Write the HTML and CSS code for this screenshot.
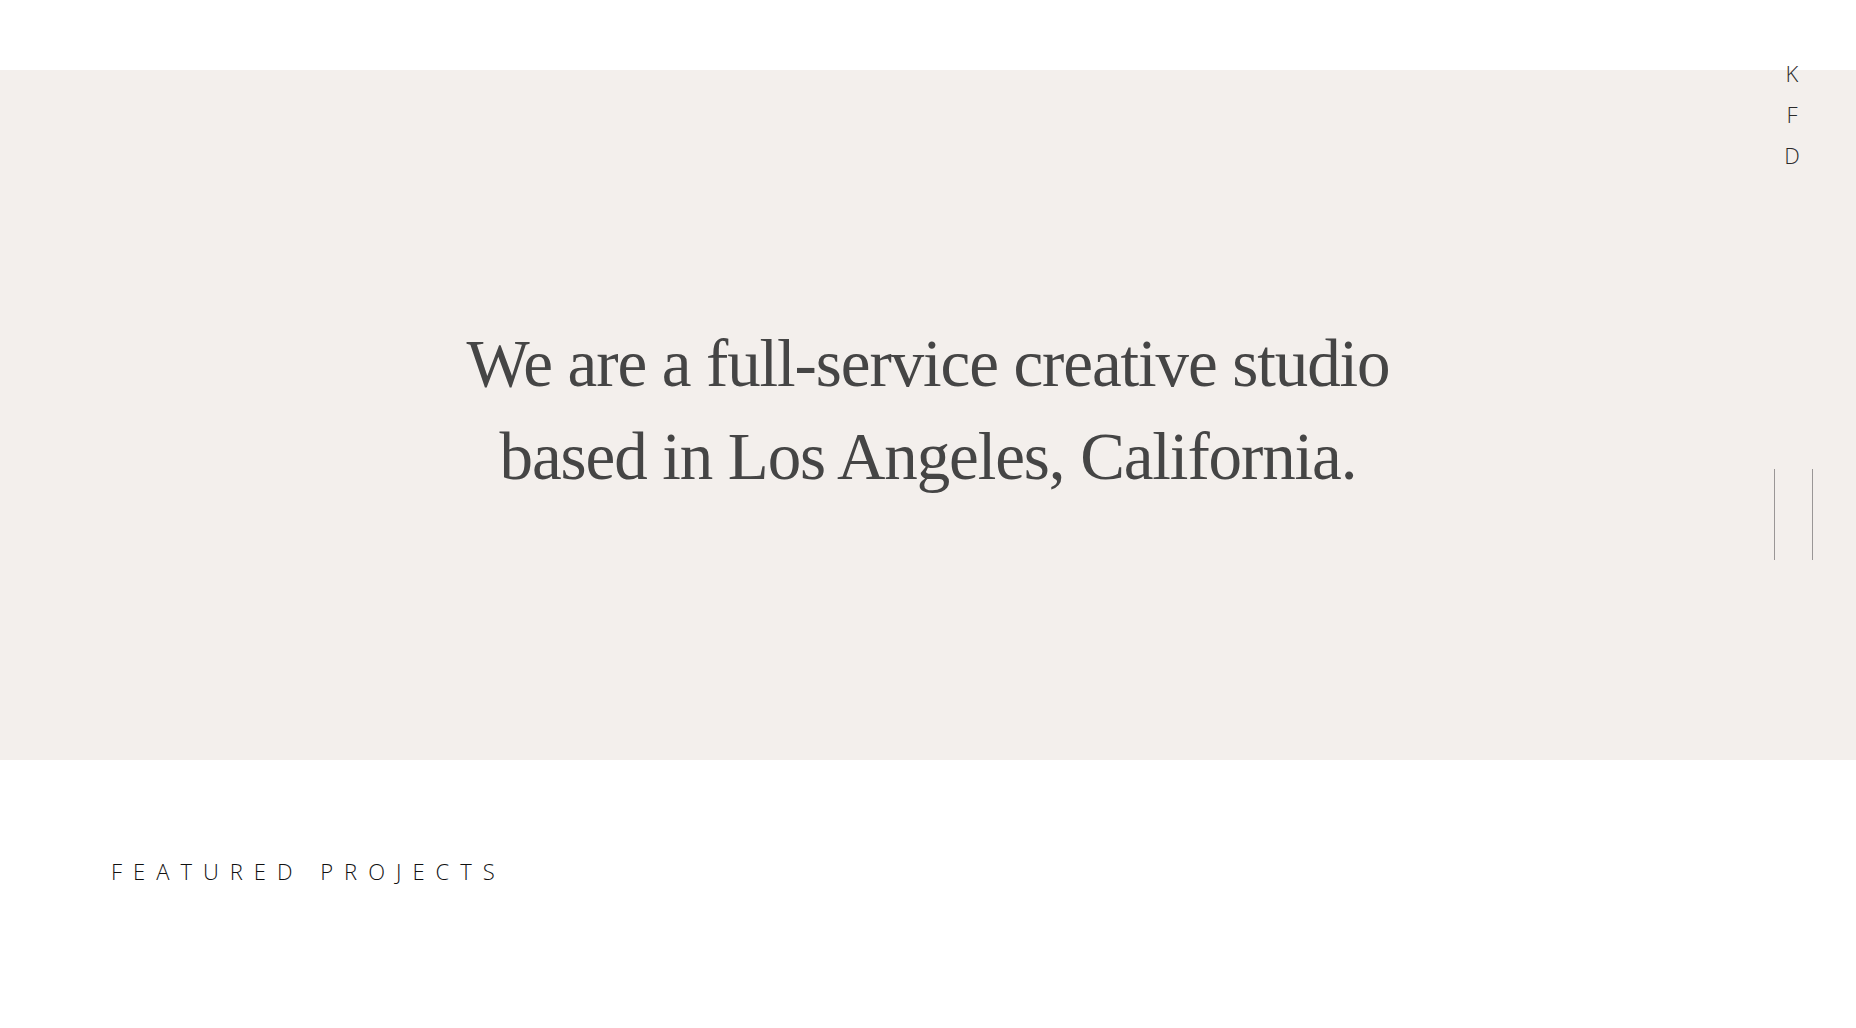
FILE: index.html
```html
<!DOCTYPE html>
<html lang="en">
<head>
<meta charset="utf-8">
<title>KFD Studio</title>
<link rel="stylesheet" href="styles.css">
</head>
<body>
<header class="topbar"></header>
<nav class="side-logo" aria-label="KFD">
  <span>K</span>
  <span>F</span>
  <span>D</span>
</nav>
<div class="pause-lines" aria-hidden="true">
  <span class="line"></span>
  <span class="line"></span>
</div>
<main>
  <section class="hero">
    <h1 class="hero-title">We are a full-service creative studio<br>based in Los Angeles, California.</h1>
  </section>
  <section class="featured">
    <h2 class="featured-title">Featured Projects</h2>
  </section>
</main>
</body>
</html>
```

FILE: styles.css
```css
* { box-sizing: border-box; }
html, body { margin: 0; padding: 0; }
body {
  background: #ffffff;
  width: 1856px;
  height: 1028px;
  overflow: hidden;
  position: relative;
  font-family: "Liberation Serif", serif;
}
.topbar {
  height: 70px;
  background: #ffffff;
}
.hero {
  height: 690px;
  background: #f3efec;
  display: flex;
  align-items: center;
  justify-content: center;
  padding-bottom: 10px;
}
.hero-title {
  margin: 0;
  font-family: "Liberation Serif", "DejaVu Serif", serif;
  font-weight: 400;
  font-size: 67px;
  line-height: 93px;
  color: #454545;
  text-align: center;
  letter-spacing: -1.1px;
}
.side-logo {
  position: absolute;
  top: 60px;
  left: 1778px;
  width: 28px;
  display: flex;
  flex-direction: column;
  align-items: center;
  gap: 14px;
  font-family: "Open Sans", sans-serif;
  font-weight: 300;
  font-size: 22px;
  line-height: 27px;
  color: #2a2a2a;
}
.pause-lines {
  position: absolute;
  top: 469px;
  left: 1774px;
  width: 39px;
  height: 91px;
  display: flex;
  justify-content: space-between;
}
.pause-lines .line {
  width: 1px;
  height: 100%;
  background: #9a9696;
}
.featured {
  padding: 96px 0 0 111px;
}
.featured-title {
  margin: 0;
  font-family: "Open Sans", sans-serif;
  font-weight: 300;
  font-size: 22px;
  line-height: 30px;
  letter-spacing: 0.5em;
  text-transform: uppercase;
  color: #111;
}
```
